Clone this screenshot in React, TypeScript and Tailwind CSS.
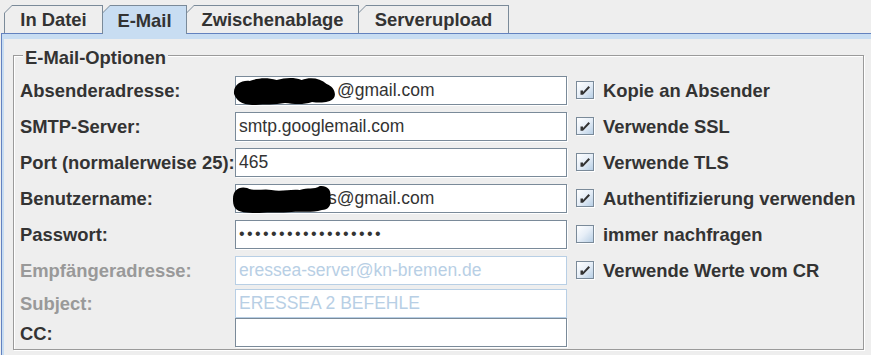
import React from 'react';

// --- Tab ---
const Tab = ({ label, width, selected }: { label: string; width: number; selected?: boolean }) => (
  <div
    className={`relative -ml-px first:ml-0 h-[28px] bg-[#7a8a99] pt-px px-px [clip-path:polygon(8px_0,100%_0,100%_100%,0_100%,0_8px)] ${selected ? 'z-10 h-[29px] -mb-px' : ''}`}
    style={{ width }}
  >
    <div
      className={`h-full flex items-center justify-center pt-px font-bold text-[18.4px] text-[#333333] [clip-path:polygon(7px_0,100%_0,100%_100%,0_100%,0_7px)] ${selected ? 'bg-[#c8ddf2]' : 'bg-[#eeeeee]'}`}
    >
      {label}
    </div>
  </div>
);

const Check = ({ checked }: { checked: boolean }) => (
  <div className="w-[18px] h-[18px] border border-[#7a8a99] bg-gradient-to-br from-white via-[#e6eef7] to-[#b8cfe5] shadow-[1px_1px_0_#ffffff] flex items-center justify-center">
    {checked && (
      <svg width="14" height="14" viewBox="0 0 14 14">
        <path d="M2.5 7.5 L5 7.5 L5 9 L10.5 3 L12 4.5 L5 11.8 L2.5 11.8 Z" fill="#333333" />
      </svg>
    )}
  </div>
);

const Blob = ({ w, d }: { w: number; d: string }) => (
  <svg width={w} height="28" viewBox="0 0 100 28" preserveAspectRatio="none" className="absolute left-[-3px] top-0">
    <path d={d} fill="#000000" />
  </svg>
);

const blobA =
  'M1 17 C0 8 8 3 16 4 C24 1 32 0 42 3 C50 1 58 0 66 3 C74 0 84 1 90 7 C96 9 100 16 97 21 C93 26 84 26 76 25 C68 28 58 27 50 26 C40 28 30 27 22 28 C12 28 4 26 1 17 Z';
const blobB =
  'M0 14 C0 5 6 1 14 3 C22 7 30 3 38 5 C48 7 56 4 66 5 C74 2 80 5 86 1 C94 0 98 6 96 12 C98 18 96 25 88 25 C78 28 68 26 58 27 C48 28 36 27 26 28 C16 28 6 28 2 23 C0 20 0 17 0 14 Z';

const Field = ({ children, disabled }: { children?: React.ReactNode; disabled?: boolean }) => (
  <div
    className={`relative h-[29px] w-[332px] bg-white border px-[3px] flex items-center text-[17.5px] whitespace-nowrap ${
      disabled ? 'border-[#b8cfe5] text-[#b8cfe5]' : 'border-[#7a8a99] text-[#333333] shadow-[1px_1px_0_#ffffff]'
    }`}
  >
    {children}
  </div>
);

type Row = {
  label: string;
  disabled?: boolean;
  field: React.ReactNode;
  check?: { text: string; checked: boolean };
  h: string;
};

const rows: Row[] = [
  {
    label: 'Absenderadresse:',
    field: (
      <>
        <Blob w={104} d={blobA} />
        <span className="pl-[98px]">@gmail.com</span>
      </>
    ),
    check: { text: 'Kopie an Absender', checked: true },
    h: 'h-[36px]',
  },
  { label: 'SMTP-Server:', field: 'smtp.googlemail.com', check: { text: 'Verwende SSL', checked: true }, h: 'h-[36px]' },
  { label: 'Port (normalerweise 25):', field: '465', check: { text: 'Verwende TLS', checked: true }, h: 'h-[36px]' },
  {
    label: 'Benutzername:',
    field: (
      <>
        <Blob w={101} d={blobB} />
        <span className="pl-[89px]">s@gmail.com</span>
      </>
    ),
    check: { text: 'Authentifizierung verwenden', checked: true },
    h: 'h-[36px]',
  },
  {
    label: 'Passwort:',
    field: <span className="tracking-[2.4px] text-[16px]">{'••••••••••••••••••'}</span>,
    check: { text: 'immer nachfragen', checked: false },
    h: 'h-[36px]',
  },
  {
    label: 'Empfängeradresse:',
    disabled: true,
    field: 'eressea-server@kn-bremen.de',
    check: { text: 'Verwende Werte vom CR', checked: true },
    h: 'h-[36px]',
  },
  { label: 'Subject:', disabled: true, field: 'ERESSEA 2 BEFEHLE', h: 'h-[30px]' },
  { label: 'CC:', field: null, h: 'h-[29px]' },
];

export default function App() {
  return (
    <div className="w-[871px] h-[355px] overflow-hidden bg-[#eeeeee] font-['Liberation_Sans',Arial,sans-serif]">
      {/* tab strip */}
      <div className="h-[33px] pt-[5px] pl-[4px] flex items-start">
        <Tab label="In Datei" width={99} />
        <Tab label="E-Mail" width={85} selected />
        <Tab label="Zwischenablage" width={173} />
        <Tab label="Serverupload" width={151} />
      </div>

      {/* content border */}
      <div className="ml-[1px] border-t border-l border-[#6382bf] bg-[#c8ddf2] pt-[5px] pl-[2px]">
        <div className="bg-[#eeeeee] h-[330px] pt-[16px] pl-[9px]">
          <div className="relative w-[851px] h-[295px] border border-[#9a9a9a] shadow-[inset_1px_1px_0_#ffffff,1px_1px_0_#ffffff] pt-[16px] pl-[6px]">
            <div className="absolute left-[9px] -top-[8px] px-[2px] bg-[#eeeeee] font-bold text-[18.4px] leading-[20px] text-[#333333]">
              E-Mail-Optionen
            </div>

            {rows.map((r) => (
              <div key={r.label} className={`flex items-center ${r.h}`}>
                <div
                  className={`w-[215px] pt-[2px] font-bold text-[18.4px] whitespace-nowrap ${r.disabled ? 'text-[#999999]' : 'text-[#333333]'}`}
                >
                  {r.label}
                </div>
                <Field disabled={r.disabled}>{r.field}</Field>
                {r.check && (
                  <div className="ml-[9px] flex items-center gap-[9px]">
                    <Check checked={r.check.checked} />
                    <span className="pt-[2px] font-bold text-[18.4px] text-[#333333] whitespace-nowrap">{r.check.text}</span>
                  </div>
                )}
              </div>
            ))}
          </div>
        </div>
      </div>
    </div>
  );
}
